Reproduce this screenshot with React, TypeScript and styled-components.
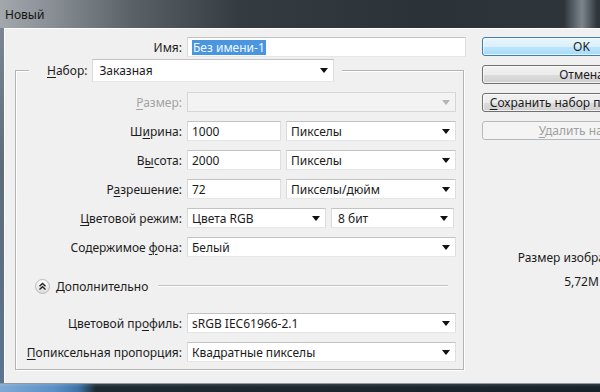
import styled, { createGlobalStyle } from "styled-components";
import type { ReactNode } from "react";

const GlobalStyle = createGlobalStyle`
  html, body {
    margin: 0;
    padding: 0;
    background: #1f2a32;
    overflow: hidden;
  }
  body {
    font-family: "Noto Sans", Tahoma, sans-serif;
    font-size: 12px;
    color: #1c1c1c;
  }
`;

const Screen = styled.div`
  width: 600px;
  height: 392px;
  overflow: hidden;
  display: flex;
  flex-direction: column;
`;

const TitleBar = styled.div`
  flex: none;
  height: 28px;
  display: flex;
  align-items: center;
  padding-left: 5px;
  box-sizing: border-box;
  color: #141414;
  font-size: 12px;
  background:
    linear-gradient(90deg, rgba(0, 0, 0, 0) 94%, rgba(190, 200, 208, 0.55) 97%, rgba(0, 0, 0, 0) 99.5%),
    linear-gradient(90deg, #a3a8ad 0%, #8a9096 8%, #5a6268 22%, #343c42 40%, #2b3338 70%, #2e363c 100%);
`;

const WindowRow = styled.div`
  flex: 1;
  min-height: 0;
  display: flex;
  padding-left: 4px;
  background: linear-gradient(180deg, #7b8690 0%, #5f6c78 40%, #5a7590 100%);
`;

const Body = styled.div`
  flex: 1;
  min-height: 0;
  overflow: hidden;
  display: flex;
  gap: 16px;
  padding: 8px 0 0 10px;
  background: #f0f0f0;
  border-top: 1px solid #ffffff;
  border-left: 1px solid #fbfbfb;
`;

const BottomEdge = styled.div`
  flex: none;
  height: 8px;
  border-top: 1px solid #8f989f;
  background:
    linear-gradient(180deg, rgba(255, 255, 255, 0.12) 0%, rgba(0, 0, 0, 0) 40%),
    linear-gradient(90deg, #7fa9d4 0%, #5a90c8 9%, #3f74aa 13%, #1e2a33 16%, #18222a 100%);
`;

const LeftColumn = styled.div`
  width: 451px;
  flex: none;
  display: flex;
  flex-direction: column;
  align-items: flex-start;
`;

const RightColumn = styled.div`
  width: 199px;
  flex: none;
  display: flex;
  flex-direction: column;
  gap: 9px;
`;

const Row = styled.div`
  display: flex;
  align-items: center;
  height: 20px;
  gap: 5px;
`;

const Label = styled.div<{ $w?: number; $disabled?: boolean }>`
  width: ${(p) => p.$w ?? 166}px;
  flex: none;
  text-align: right;
  white-space: nowrap;
  color: ${(p) => (p.$disabled ? "#a3a3a3" : "#1c1c1c")};
`;

const Mn = styled.u`
  text-decoration-thickness: 1px;
  text-underline-offset: 2px;
`;

const TextBox = styled.div<{ $w: number }>`
  width: ${(p) => p.$w}px;
  height: 20px;
  box-sizing: border-box;
  flex: none;
  display: flex;
  align-items: center;
  padding-left: 4px;
  background: #ffffff;
  border: 1px solid;
  border-color: #c3c3c3 #dedede #e6e6e6 #dadada;
  white-space: nowrap;
  overflow: hidden;
`;

const Selected = styled.span`
  background: #4a95df;
  color: #f4f9ff;
  padding: 0 1px;
  line-height: 15px;
`;

const SelectBox = styled.div<{ $w: number; $h?: number; $disabled?: boolean }>`
  width: ${(p) => p.$w}px;
  height: ${(p) => p.$h ?? 20}px;
  box-sizing: border-box;
  flex: none;
  display: flex;
  align-items: center;
  justify-content: space-between;
  padding: 0 5px 0 4px;
  background: ${(p) => (p.$disabled ? "#f3f3f3" : "#ffffff")};
  border: 1px solid;
  border-color: ${(p) =>
    p.$disabled ? "#d6d6d6" : "#c3c3c3 #dedede #e6e6e6 #dadada"};
  white-space: nowrap;
  overflow: hidden;
`;

const SelectText = styled.span<{ $pad?: number }>`
  padding-left: ${(p) => p.$pad ?? 0}px;
`;

const Arrow = ({ color = "#111" }: { color?: string }) => (
  <svg width="8" height="5" viewBox="0 0 8 5">
    <path d="M0 0 H8 L4 5 Z" fill={color} />
  </svg>
);

const Select = ({
  w,
  h,
  pad,
  disabled,
  children,
}: {
  w: number;
  h?: number;
  pad?: number;
  disabled?: boolean;
  children?: ReactNode;
}) => (
  <SelectBox $w={w} $h={h} $disabled={disabled}>
    <SelectText $pad={pad}>{children}</SelectText>
    <Arrow color={disabled ? "#b4b4b4" : "#111"} />
  </SelectBox>
);

/* group box: the preset header sits across its top border */
const GroupBox = styled.section`
  margin-top: 13px;
  width: 449px;
  box-sizing: border-box;
  padding: 0 6px 7px 0;
  border: 1px solid #b4b4b4;
  box-shadow: inset 1px 1px 0 #ffffff, 1px 1px 0 #ffffff;
  display: flex;
  flex-direction: column;
  gap: 9px;
`;

const Legend = styled.div`
  align-self: flex-start;
  margin: -12px 0 0 13px;
  padding: 0 8px 0 18px;
  height: 23px;
  display: flex;
  align-items: center;
  gap: 5px;
  background: #f0f0f0;
`;

const LegendLabel = styled.span`
  white-space: nowrap;
`;

const RowList = styled.div`
  display: flex;
  flex-direction: column;
  gap: 9px;
  margin-top: 1px;
`;

const AdvancedRow = styled.div`
  display: flex;
  align-items: center;
  height: 16px;
  margin: 12px 9px 10px 19px;
  gap: 6px;
`;

const AdvancedText = styled.span`
  white-space: nowrap;
`;

const Rule = styled.div`
  flex: 1;
  height: 0;
  margin-left: 4px;
  border-top: 1px solid #c2c2c2;
  border-bottom: 1px solid #ffffff;
`;

const RoundButton = styled.div`
  width: 15px;
  height: 15px;
  box-sizing: border-box;
  border-radius: 50%;
  border: 1px solid #b9b9b9;
  background: linear-gradient(180deg, #ffffff 0%, #ececec 55%, #dcdcdc 100%);
  display: flex;
  align-items: center;
  justify-content: center;
`;

const Button = styled.div<{ $primary?: boolean; $disabled?: boolean }>`
  height: 19px;
  box-sizing: border-box;
  display: flex;
  align-items: center;
  justify-content: center;
  border-radius: 3px;
  white-space: nowrap;
  overflow: hidden;
  border: 1px solid
    ${(p) => (p.$primary ? "#3c7fb1" : p.$disabled ? "#b5b9bc" : "#707070")};
  color: ${(p) => (p.$disabled ? "#a0a0a0" : "#1c1c1c")};
  background: ${(p) =>
    p.$primary
      ? "linear-gradient(180deg, #eaf6fd 0%, #d9f0fc 50%, #bee6fd 51%, #a7d9f5 100%)"
      : p.$disabled
      ? "#f4f4f4"
      : "linear-gradient(180deg, #f2f2f2 0%, #ebebeb 50%, #dddddd 51%, #cfcfcf 100%)"};
  box-shadow: ${(p) => (p.$disabled ? "none" : "inset 0 0 0 1px rgba(255,255,255,0.7)")};
`;

const InfoBlock = styled.div`
  margin-top: 101px;
  display: flex;
  flex-direction: column;
  align-items: center;
  gap: 8px;
  line-height: 16px;
`;

export default function App() {
  return (
    <Screen>
      <GlobalStyle />
      <TitleBar>Новый</TitleBar>
      <WindowRow>
        <Body>
          <LeftColumn>
            <Row>
              <Label $w={167}>Имя:</Label>
              <TextBox $w={279}>
                <Selected>Без имени-1</Selected>
              </TextBox>
            </Row>

            <GroupBox>
              <Legend>
                <LegendLabel>
                  <Mn>Н</Mn>абор:
                </LegendLabel>
                <Select w={242} h={23} pad={2}>
                  Заказная
                </Select>
              </Legend>

              <RowList>
                <Row>
                  <Label $disabled>
                    <Mn>Р</Mn>азмер:
                  </Label>
                  <Select w={269} disabled />
                </Row>
                <Row>
                  <Label>
                    Ш<Mn>и</Mn>рина:
                  </Label>
                  <TextBox $w={94}>1000</TextBox>
                  <Select w={170}>Пикселы</Select>
                </Row>
                <Row>
                  <Label>
                    В<Mn>ы</Mn>сота:
                  </Label>
                  <TextBox $w={94}>2000</TextBox>
                  <Select w={170}>Пикселы</Select>
                </Row>
                <Row>
                  <Label>
                    Р<Mn>а</Mn>зрешение:
                  </Label>
                  <TextBox $w={94}>72</TextBox>
                  <Select w={170}>Пикселы/дюйм</Select>
                </Row>
                <Row>
                  <Label>
                    <Mn>Ц</Mn>ветовой режим:
                  </Label>
                  <Select w={139}>Цвета RGB</Select>
                  <Select w={123} pad={2}>
                    8 бит
                  </Select>
                </Row>
                <Row>
                  <Label>
                    Содержимое <Mn>ф</Mn>она:
                  </Label>
                  <Select w={269}>Белый</Select>
                </Row>
              </RowList>

              <AdvancedRow>
                <RoundButton>
                  <svg width="9" height="9" viewBox="0 0 9 9">
                    <path
                      d="M1.5 4.2 L4.5 1.4 L7.5 4.2 M1.5 7.6 L4.5 4.8 L7.5 7.6"
                      fill="none"
                      stroke="#222"
                      strokeWidth="1.4"
                    />
                  </svg>
                </RoundButton>
                <AdvancedText>Дополнительно</AdvancedText>
                <Rule />
              </AdvancedRow>

              <Row>
                <Label>
                  Цветовой пр<Mn>о</Mn>филь:
                </Label>
                <Select w={269}>sRGB IEC61966-2.1</Select>
              </Row>
              <Row>
                <Label>
                  <Mn>П</Mn>опиксельная пропорция:
                </Label>
                <Select w={269}>Квадратные пикселы</Select>
              </Row>
            </GroupBox>
          </LeftColumn>

          <RightColumn>
            <Button $primary>OK</Button>
            <Button>Отмена</Button>
            <Button>
              <span>
                <Mn>С</Mn>охранить набор параметров...
              </span>
            </Button>
            <Button $disabled>
              <span>
                <Mn>У</Mn>далить набор
              </span>
            </Button>
            <InfoBlock>
              <span>Размер изображения:</span>
              <span>5,72M</span>
            </InfoBlock>
          </RightColumn>
        </Body>
      </WindowRow>
      <BottomEdge />
    </Screen>
  );
}
